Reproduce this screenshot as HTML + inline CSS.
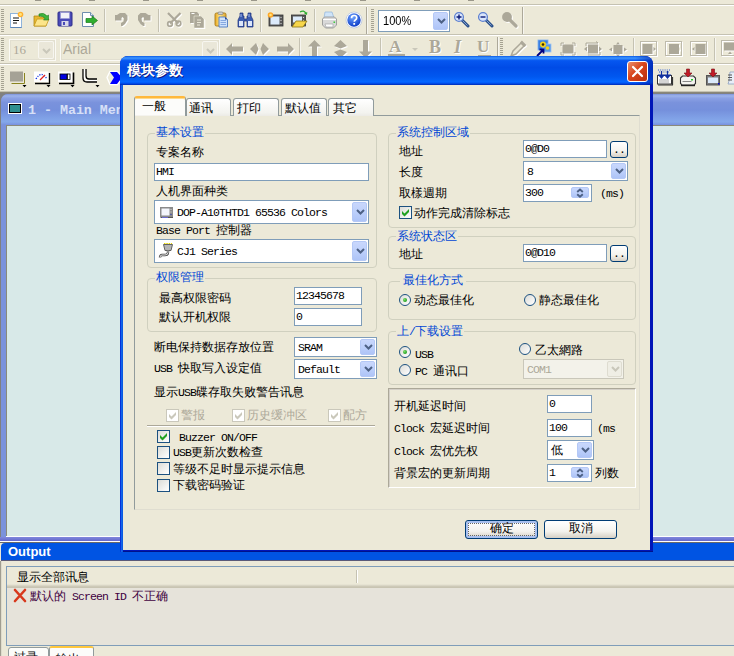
<!DOCTYPE html>
<html lang="zh">
<head>
<meta charset="utf-8">
<title>模块参数</title>
<style>
*{box-sizing:border-box;margin:0;padding:0}
html,body{width:734px;height:656px;overflow:hidden;background:#ece9d8}
body{position:relative;font-family:"Liberation Sans",sans-serif;font-size:12px;line-height:12px;color:#000}
.a{position:absolute}
.t{position:absolute;white-space:nowrap;font-size:12px;line-height:13px;height:13px}
.m{font-family:"Liberation Mono",monospace;font-size:11.500px;letter-spacing:-.9px}
.blue{color:#0046d5}
.hl{position:absolute;height:1px}
.vl{position:absolute;width:1px}
/* toolbars */
.grip{position:absolute;width:3px;background:repeating-linear-gradient(180deg,#a5a292 0,#a5a292 1px,#ece9d8 1px,#ece9d8 2px)}
.sep{position:absolute;width:1px;background:#c5c2b2;box-shadow:1px 0 0 #f7f6f0}
/* xp controls */
.tb{position:absolute;background:#fff;border:1px solid #7f9db9;font-size:12px;line-height:15px;padding-left:1px;white-space:nowrap;overflow:hidden}
.cb{position:absolute;background:#fff;border:1px solid #7f9db9;white-space:nowrap;overflow:hidden}
.dd{position:absolute;right:1px;top:1px;bottom:1px;width:15px;border-radius:2px;border:1px solid #b4c8f6;background:linear-gradient(180deg,#c9d7fc 0%,#bdd0fb 50%,#aec4f7 100%)}
.dd svg{position:absolute;left:3px;top:50%;margin-top:-3px}
.gb{position:absolute;border:1px solid #d0d0bf;border-radius:4px}
.gl{position:absolute;background:#ece9d8;color:#0046d5;white-space:nowrap;font-size:12px;line-height:13px;height:13px;padding:0 1px}
.chk{position:absolute;width:13px;height:13px;border:1px solid #1c5180;background:linear-gradient(135deg,#dcdcd7,#fff)}
.rad{position:absolute;width:12px;height:12px;border:1px solid #1c5180;border-radius:50%;background:linear-gradient(135deg,#dcdcd7,#fff)}
.btn{position:absolute;border:1px solid #003c74;border-radius:3px;background:linear-gradient(180deg,#fff 0%,#f4f3ee 60%,#d6d0c5 100%);text-align:center;font-size:12px}
.tab{position:absolute;border:1px solid #919b9c;border-bottom:none;border-radius:3px 3px 0 0;background:linear-gradient(180deg,#fff,#f3f3ef 80%,#ecebe6);font-size:12px;line-height:13px;white-space:nowrap}

.chk.dis{border-color:#cac8bb;background:#fff}
.chk.on::after,.chk.dis::after{content:"";position:absolute;left:2px;top:2px;width:7px;height:8px;background:#21a121;clip-path:polygon(0 2px,2.5px 4.5px,7px 0,7px 3px,2.5px 7.5px,0 5px)}
.chk.dis::after{background:#cac8bb}
.rad.on::after{content:"";position:absolute;left:3px;top:3px;width:4px;height:4px;border-radius:50%;background:radial-gradient(circle at 35% 35%,#7ede6a,#21a121 70%)}
.btn.def{box-shadow:inset 0 0 0 2px #a9c1f0,inset 0 -2px 0 #4b7ee0}
.btn.def::after{content:"";position:absolute;left:2px;top:2px;right:2px;bottom:2px;border:1px dotted #666}
.sp{position:absolute;right:2px;top:2px;bottom:3px;width:18px;border-radius:2px;border:1px solid #b4c8f6;background:linear-gradient(180deg,#c9d7fc 0%,#bdd0fb 50%,#aec4f7 100%)}
svg.dis{filter:drop-shadow(1px 1px 0 #fff)}
.emb{text-shadow:1px 1px 0 #fff}
</style>
</head>
<body>

<!-- ===== top strip / toolbars ===== -->
<div id="toolbars" class="a" style="left:0;top:0;width:734px;height:93px;background:#ece9d8">
  <div class="hl" style="left:0;top:4px;width:734px;background:#c5c2b2"></div>
  <div class="hl" style="left:0;top:5px;width:734px;background:#fff"></div>
  <div class="hl" style="left:0;top:34px;width:734px;background:#c5c2b2"></div>
  <div class="hl" style="left:0;top:35px;width:734px;background:#fff"></div>
  <div class="hl" style="left:0;top:63px;width:734px;background:#c5c2b2"></div>
  <div class="hl" style="left:0;top:64px;width:734px;background:#fff"></div>
  <div class="hl" style="left:0;top:91px;width:734px;background:#c5c2b2"></div>
  <div class="hl" style="left:0;top:92px;width:734px;background:#8a8778"></div>
  <div class="grip" style="left:1px;top:9px;height:23px"></div>
  <div class="grip" style="left:1px;top:38px;height:23px"></div>
  <div class="grip" style="left:1px;top:67px;height:23px"></div>
  <!-- menu text remnants at very top -->
  <div class="a" style="left:35px;top:0;width:6px;height:1px;background:#9a978a"></div>
  <div class="a" style="left:89px;top:0;width:6px;height:1px;background:#9a978a"></div>
  <div class="a" style="left:143px;top:0;width:6px;height:1px;background:#9a978a"></div>
  <div class="a" style="left:197px;top:0;width:6px;height:1px;background:#9a978a"></div>
  <div class="a" style="left:251px;top:0;width:6px;height:1px;background:#9a978a"></div>
  <div class="a" style="left:305px;top:0;width:6px;height:1px;background:#9a978a"></div>
  <div class="a" style="left:360px;top:0;width:6px;height:1px;background:#9a978a"></div>
  <div class="a" style="left:414px;top:0;width:6px;height:1px;background:#9a978a"></div>
  <div class="a" style="left:468px;top:0;width:6px;height:1px;background:#9a978a"></div>
  <!-- toolbar 1 icons -->
  <svg class="a" style="left:9px;top:11px" width="16" height="18" viewBox="0 0 16 18"><rect x="1.5" y="2.5" width="11" height="14" fill="#fff" stroke="#8fb4dc"/><path d="M1.5 16.5h11" stroke="#5c86b8"/><path d="M4 7h6M4 9.5h6M4 12h4" stroke="#111" stroke-width="1.2"/><circle cx="11.5" cy="3.5" r="2.8" fill="#ffb02e"/><circle cx="11.5" cy="3.5" r="1.4" fill="#ffe27a"/></svg>
  <svg class="a" style="left:33px;top:11px" width="17" height="17" viewBox="0 0 17 17"><path d="M1 5h5l1 1h6v9H1z" fill="#e8b830" stroke="#b08818" stroke-width=".8"/><path d="M1 15l3-7h12l-3 7z" fill="#fce58a" stroke="#c49a20" stroke-width=".8"/><path d="M6 3q5-2 8 2l1.5-1v5h-5l1.5-1.5q-2-3-6-2.500z" fill="#3fb53f" stroke="#1f7a1f" stroke-width=".6"/></svg>
  <svg class="a" style="left:57px;top:11px" width="16" height="16" viewBox="0 0 16 16"><rect x="1" y="1" width="14" height="14" rx="1" fill="#4a4ab8" stroke="#2c2c8a"/><rect x="3.500" y="1.500" width="9" height="6" fill="#f2f2f8" stroke="#9a9ad8" stroke-width=".6"/><rect x="4.500" y="10" width="7" height="5" fill="#d8d8e8"/><rect x="6" y="11" width="2" height="3" fill="#4a4ab8"/></svg>
  <svg class="a" style="left:81px;top:11px" width="17" height="17" viewBox="0 0 17 17"><path d="M1.500 1.500h8l3 3v11h-11z" fill="#fff" stroke="#6f8eae"/><path d="M9.500 1.500v3h3" fill="#dfe8f2" stroke="#6f8eae"/><path d="M5 7.500h6V5l5.500 4.500L11 14v-2.500H5z" fill="#2fae2f" stroke="#1a7a1a" stroke-width=".7"/></svg>
  <div class="sep" style="left:104px;top:9px;height:23px"></div>
  <!-- undo / redo (disabled) -->
  <svg class="a" style="left:114px;top:12px" width="16" height="16" viewBox="0 0 16 16"><path d="M1 3h2l3-2h5l2.500 2.500v4.500l-2.500 4-2.500 2h-1.500v-3l2.500-1.500.5-3-1.500-1.500-1 1v2.500h-6.500z" fill="#fff" transform="translate(1,1)"/><path d="M1 3h2l3-2h5l2.500 2.500v4.500l-2.500 4-2.500 2h-1.500v-3l2.500-1.500.5-3-1.500-1.500-1 1v2.500h-6.500z" fill="#aca899"/></svg>
  <svg class="a" style="left:136px;top:12px" width="17" height="16" viewBox="0 0 17 16"><g transform="translate(15.500,0) scale(-1,1)"><path d="M1 3h2l3-2h5l2.500 2.500v4.500l-2.500 4-2.500 2h-1.500v-3l2.500-1.500.5-3-1.500-1.500-1 1v2.500h-6.500z" fill="#fff" transform="translate(-1,1)"/><path d="M1 3h2l3-2h5l2.500 2.500v4.500l-2.500 4-2.500 2h-1.500v-3l2.500-1.500.5-3-1.500-1.500-1 1v2.500h-6.500z" fill="#aca899"/></g></svg>
  <div class="sep" style="left:158px;top:9px;height:23px"></div>
  <!-- cut / copy (disabled) -->
  <svg class="a dis" style="left:166px;top:12px" width="16" height="16" viewBox="0 0 16 16"><path d="M2 1L12.500 11.500M14.500 1L4 11.500" stroke="#aca899" stroke-width="2.200"/><circle cx="4" cy="12" r="2.300" fill="none" stroke="#aca899" stroke-width="1.700"/><circle cx="12.500" cy="11.500" r="2.300" fill="none" stroke="#aca899" stroke-width="1.700"/></svg>
  <svg class="a dis" style="left:189px;top:11px" width="16" height="17" viewBox="0 0 16 17"><path d="M1 1h7l2 2v9H1z" fill="#aca899"/><path d="M5 5h7l3 3v9H5z" fill="#aca899" stroke="#ece9d8" stroke-width=".6"/><path d="M8 9h4M8 11.500h4M8 14h3" stroke="#ece9d8" stroke-width="1"/><path d="M2.500 2.500h3" stroke="#fff" stroke-width="1"/></svg>
  <!-- paste -->
  <svg class="a" style="left:214px;top:11px" width="15" height="17" viewBox="0 0 15 17"><defs><linearGradient id="pg" x1="0" x2="1"><stop offset="0" stop-color="#e8a820"/><stop offset=".45" stop-color="#fde58a"/><stop offset="1" stop-color="#e0a428"/></linearGradient></defs><rect x="1" y="2" width="11" height="13" rx="1.500" fill="url(#pg)" stroke="#a87c1c" stroke-width=".9"/><rect x="4" y="1" width="5" height="2.500" rx="1" fill="#d0d0d0" stroke="#777" stroke-width=".6"/><path d="M5 6h6l2.500 2.500v7.500h-8.500z" fill="#cfe2fb" stroke="#4d78c0" stroke-width=".9"/><path d="M11 6v2.500h2.500z" fill="#2a4a9a"/><path d="M6.500 9.500h5.500M6.500 11.500h5.500M6.500 13.500h5.500" stroke="#7da2dc" stroke-width=".9"/></svg>
  <!-- find (binoculars) -->
  <svg class="a" style="left:237px;top:12px" width="17" height="16" viewBox="0 0 17 16"><path d="M3 1h3v3h1v3h3V4h1V1h3v3l2 4v7h-6V9H7v6H1V8l2-4z" fill="#3c5cb0" stroke="#1c2f78" stroke-width=".7"/><rect x="2" y="9" width="4" height="5" fill="#dce6fa"/><rect x="11" y="9" width="4" height="5" fill="#dce6fa"/><path d="M4 2v3M12 2v3" stroke="#a9bdf0" stroke-width="1"/></svg>
  <div class="sep" style="left:260px;top:9px;height:23px"></div>
  <!-- new screen -->
  <svg class="a" style="left:267px;top:11px" width="17" height="17" viewBox="0 0 17 17"><rect x="2" y="4" width="14" height="11" fill="#5a5a5a" stroke="#333" stroke-width=".8"/><rect x="3.500" y="5.500" width="9" height="8" fill="#dcebfb"/><path d="M14 6v1M14 9v1M14 12v1" stroke="#ddd" stroke-width="1"/><circle cx="3.500" cy="4" r="2.800" fill="#ffa727"/><circle cx="3.500" cy="4" r="1.300" fill="#ffe27a"/></svg>
  <!-- open screen -->
  <svg class="a" style="left:290px;top:9px" width="18" height="20" viewBox="0 0 18 20"><rect x="1.500" y="6" width="14" height="11" fill="#5a5a5a" stroke="#333" stroke-width=".8"/><rect x="3" y="7.500" width="9" height="6" fill="#dcebfb"/><path d="M13.500 8v1M13.500 11v1" stroke="#ddd" stroke-width="1"/><path d="M2 18l4-6h11l-4 6z" fill="#f7d64a" stroke="#8a7414" stroke-width=".8"/><path d="M10 3q4-2.500 6 1.500" fill="none" stroke="#2fae2f" stroke-width="1.300"/><path d="M14 4.500l3 1.500.3-3z" fill="#2fae2f"/></svg>
  <div class="sep" style="left:314px;top:9px;height:23px"></div>
  <!-- print -->
  <svg class="a" style="left:321px;top:11px" width="17" height="18" viewBox="0 0 17 18"><path d="M4 1h7l2 6H3z" fill="#cfe4f8" stroke="#8fb4dc" stroke-width=".7"/><path d="M1.500 8l2-2h10l2 2v6l-3 3h-8l-3-3z" fill="#d9d9d9" stroke="#8e8e8e" stroke-width=".8"/><path d="M2 8.500h13" stroke="#fff"/><path d="M4 13h8v3H5z" fill="#fff" stroke="#9a9a9a" stroke-width=".6"/><rect x="12.500" y="10.500" width="1.600" height="1.400" fill="#2ec82e"/></svg>
  <!-- help -->
  <svg class="a" style="left:345px;top:11px" width="18" height="18" viewBox="0 0 18 18"><defs><radialGradient id="hg" cx="40%" cy="30%" r="70%"><stop offset="0" stop-color="#6fa4ff"/><stop offset="1" stop-color="#0f3fc8"/></radialGradient></defs><circle cx="9" cy="9" r="8" fill="#fff" stroke="#b8c4dc" stroke-width=".8"/><circle cx="9" cy="9" r="6.700" fill="url(#hg)"/><path d="M6.500 7.200q0-2.700 2.600-2.700t2.600 2.300q0 1.400-1.400 2.100-1 .6-1 1.800" fill="none" stroke="#fff" stroke-width="1.700"/><rect x="8.300" y="12" width="1.800" height="1.800" fill="#fff"/></svg>
  <div class="sep" style="left:366px;top:7px;height:27px;background:#aca899"></div>
  <!-- toolbar 1b : zoom -->
  <div class="grip" style="left:371px;top:9px;height:23px"></div>
  <div class="cb" style="left:378px;top:10px;width:72px;height:22px">
    <div class="t" style="left:4px;top:4px;font-family:'Liberation Sans',sans-serif;font-size:12px;transform:scaleX(.92);transform-origin:0 0">100%</div>
    <div class="dd"><svg width="9" height="6" viewBox="0 0 9 6"><path d="M1 1l3.500 3.500L8 1" fill="none" stroke="#4d6185" stroke-width="2"/></svg></div>
  </div>
  <svg class="a" style="left:453px;top:11px" width="17" height="17" viewBox="0 0 17 17"><path d="M9 9l6 6" stroke="#2a4f8a" stroke-width="3" stroke-linecap="round"/><path d="M9.500 9.500l5 5" stroke="#7fa0d0" stroke-width="1"/><circle cx="6" cy="6" r="4.400" fill="#dbe6fb" stroke="#5c7fd0" stroke-width="1.300"/><path d="M3.500 6h5M6 3.500v5" stroke="#0a1a7a" stroke-width="1.400"/></svg>
  <svg class="a" style="left:477px;top:11px" width="17" height="17" viewBox="0 0 17 17"><path d="M9 9l6 6" stroke="#2a4f8a" stroke-width="3" stroke-linecap="round"/><path d="M9.500 9.500l5 5" stroke="#7fa0d0" stroke-width="1"/><circle cx="6" cy="6" r="4.400" fill="#dbe6fb" stroke="#5c7fd0" stroke-width="1.300"/><path d="M3.500 6h5" stroke="#0a1a7a" stroke-width="1.400"/></svg>
  <svg class="a dis" style="left:501px;top:11px" width="17" height="17" viewBox="0 0 17 17"><path d="M9 9l6 6" stroke="#aca899" stroke-width="3.200" stroke-linecap="round"/><circle cx="6" cy="6" r="4.900" fill="#aca899"/></svg>
  <div class="sep" style="left:522px;top:7px;height:27px;background:#aca899"></div>
  <!-- toolbar 2 : font controls (disabled) -->
  <div class="a" style="left:9px;top:39px;width:47px;height:22px;border:1px solid #fbfaf5;background:#ece9d8;box-shadow:inset 0 0 0 1px #e2dfd0">
    <div class="t" style="left:3px;top:3px;color:#aca899;font-family:'Liberation Serif',serif;font-size:13px;line-height:13px">16</div>
    <div class="a" style="right:1px;top:1px;bottom:1px;width:16px;border:1px solid #f7f6f0;border-radius:2px;background:#eae7d9"><svg class="a" style="left:3px;top:6px" width="9" height="6" viewBox="0 0 9 6"><path d="M1 1l3.500 3.500L8 1" fill="none" stroke="#c9c7ba" stroke-width="2"/></svg></div>
  </div>
  <div class="a" style="left:60px;top:39px;width:160px;height:22px;border:1px solid #fbfaf5;background:#ece9d8;box-shadow:inset 0 0 0 1px #e2dfd0">
    <div class="t" style="left:2px;top:1px;color:#aca899;font-size:14px;line-height:16px;height:16px">Arial</div>
    <div class="a" style="right:1px;top:1px;bottom:1px;width:16px;border:1px solid #f7f6f0;border-radius:2px;background:#eae7d9"><svg class="a" style="left:3px;top:6px" width="9" height="6" viewBox="0 0 9 6"><path d="M1 1l3.500 3.500L8 1" fill="none" stroke="#c9c7ba" stroke-width="2"/></svg></div>
  </div>
  <svg class="a dis" style="left:226px;top:42px" width="17" height="14" viewBox="0 0 17 14"><path d="M0 7l6-6v3.500h11v5H6V13z" fill="#aca899"/></svg>
  <svg class="a dis" style="left:250px;top:42px" width="19" height="14" viewBox="0 0 19 14"><path d="M0 7l6-6 2.500 6L6 13zM19 7l-6-6-2.500 6L13 13z" fill="#aca899"/></svg>
  <svg class="a dis" style="left:277px;top:42px" width="17" height="14" viewBox="0 0 17 14"><path d="M17 7l-6-6v3.500H0v5h11V13z" fill="#aca899"/></svg>
  <div class="sep" style="left:299px;top:38px;height:23px"></div>
  <svg class="a dis" style="left:308px;top:40px" width="13" height="18" viewBox="0 0 13 18"><path d="M6.500 0l6.500 6.500H9V18H4V6.500H0z" fill="#aca899"/></svg>
  <svg class="a dis" style="left:334px;top:40px" width="13" height="18" viewBox="0 0 13 18"><path d="M6.500 0l6.500 6-6.500 2.500L0 6zM6.500 18l6.500-6-6.500-2.500L0 12z" fill="#aca899"/></svg>
  <svg class="a dis" style="left:359px;top:40px" width="13" height="18" viewBox="0 0 13 18"><path d="M6.500 18l6.500-6.500H9V0H4v11.500H0z" fill="#aca899"/></svg>
  <div class="sep" style="left:380px;top:38px;height:23px"></div>
  <div class="t" style="left:389px;top:39px;color:#aca899;font-family:'Liberation Serif',serif;font-weight:bold;font-size:17px;line-height:16px;height:16px;text-shadow:1px 1px 0 #fff">A</div>
  <div class="a" style="left:388px;top:54px;width:17px;height:2px;background:#aca899"></div>
  <div class="a" style="left:412px;top:48px;border:3px solid transparent;border-top:3px solid #c9c7ba;border-bottom:none"></div>
  <div class="t" style="left:429px;top:39px;color:#aca899;font-family:'Liberation Serif',serif;font-weight:bold;font-size:18px;line-height:16px;height:16px;text-shadow:1px 1px 0 #fff">B</div>
  <div class="t" style="left:454px;top:39px;color:#aca899;font-family:'Liberation Serif',serif;font-weight:bold;font-style:italic;font-size:18px;line-height:16px;height:16px;text-shadow:1px 1px 0 #fff">I</div>
  <div class="t" style="left:477px;top:39px;color:#aca899;font-family:'Liberation Serif',serif;font-weight:bold;font-size:17px;line-height:16px;height:16px;text-shadow:1px 1px 0 #fff">U</div>
  <div class="a" style="left:478px;top:55px;width:13px;height:1px;background:#aca899"></div>
  <div class="sep" style="left:497px;top:37px;height:25px;background:#aca899"></div>
  <div class="grip" style="left:500px;top:38px;height:22px"></div>
  <svg class="a dis" style="left:510px;top:40px" width="17" height="17" viewBox="0 0 17 17"><path d="M1 16l2-5 8-8 3 3-8 8z" fill="#ece9d8" stroke="#aca899" stroke-width="1.500"/><path d="M11 1.500l4.500 4.500" stroke="#aca899" stroke-width="2.600"/></svg>
  <svg class="a" style="left:536px;top:39px" width="16" height="18" viewBox="0 0 16 18"><rect x="2" y="1" width="10" height="10" fill="#3a7fe0" stroke="#7fb0f0" stroke-width=".8"/><rect x="7" y="5" width="8" height="8" fill="#5a9ae8" stroke="#9cc4f4" stroke-width=".8"/><circle cx="7" cy="5.500" r="3" fill="#f2d11c"/><circle cx="7" cy="5.500" r="1.300" fill="#3a2a00"/><circle cx="11.500" cy="9" r="1.800" fill="#f2d11c"/><path d="M1 17l6-6M3.500 10.500h4v4" fill="none" stroke="#000080" stroke-width="1.800"/></svg>
  <!-- layout icons disabled -->
  <svg class="a dis" style="left:560px;top:42px" width="17" height="15" viewBox="0 0 17 15"><rect x="2.500" y="2.500" width="11" height="9" fill="#aca899"/><path d="M1 4V1h3M12 1h3v3M15 10v3h-3M4 13H1v-3" fill="none" stroke="#aca899" stroke-width="1"/></svg>
  <svg class="a dis" style="left:583px;top:40px" width="20" height="18" viewBox="0 0 20 18"><rect x="5" y="4.500" width="10" height="9" fill="#aca899"/><path d="M3 6v-3h12l-2-1.500M17 12v3H5" fill="none" stroke="#aca899" stroke-width="1"/><path d="M1 9l3-2.500v5zM19 9l-3-2.500v5z" fill="#aca899"/></svg>
  <svg class="a dis" style="left:609px;top:42px" width="18" height="15" viewBox="0 0 18 15"><rect x="4.500" y="3" width="9" height="9" fill="#aca899"/><path d="M0 7.500l3-2v4zM18 7.500l-3-2v4zM9 0l2 2.500H7zM9 15l2-2.500H7z" fill="#aca899"/></svg>
  <div class="sep" style="left:633px;top:38px;height:23px"></div>
  <svg class="a dis" style="left:640px;top:41px" width="18" height="16" viewBox="0 0 18 16"><rect x=".5" y=".5" width="16" height="14" fill="none" stroke="#bdbaab"/><rect x="2.500" y="3" width="10" height="10" fill="#aca899"/><path d="M16 8l-2.500-2v4z" fill="#aca899"/></svg>
  <svg class="a dis" style="left:665px;top:41px" width="18" height="16" viewBox="0 0 18 16"><rect x=".5" y=".5" width="16" height="14" fill="none" stroke="#bdbaab"/><rect x="4" y="3" width="10" height="10" fill="#aca899"/><path d="M2 8l2-2v4zM16 8l-2-2v4z" fill="#ece9d8"/></svg>
  <svg class="a dis" style="left:690px;top:41px" width="18" height="16" viewBox="0 0 18 16"><rect x=".5" y=".5" width="16" height="14" fill="none" stroke="#bdbaab"/><rect x="5.500" y="3" width="10" height="10" fill="#aca899"/><path d="M2 8l2.500-2v4z" fill="#aca899"/></svg>
  <div class="sep" style="left:714px;top:38px;height:23px"></div>
  <svg class="a dis" style="left:721px;top:40px" width="18" height="17" viewBox="0 0 18 17"><rect x=".5" y=".5" width="16" height="15" fill="none" stroke="#bdbaab"/><rect x="3" y="2.500" width="12" height="8" fill="#aca899"/><path d="M9 11.500l2 2.500H7z" fill="#aca899"/></svg>

  <!-- toolbar 3 -->
  <svg class="a" style="left:9px;top:70px" width="18" height="18" viewBox="0 0 18 18"><rect x="1" y="1.500" width="13" height="10" fill="#a5a296"/><path d="M15.500 3v10.500H2.500" fill="none" stroke="#8a8420" stroke-width="1"/><path d="M13.500 15h4l-2 2.300z" fill="#000"/></svg>
  <svg class="a" style="left:33px;top:70px" width="18" height="18" viewBox="0 0 18 18"><rect x="1" y="1.500" width="14.500" height="10.500" fill="#fff"/><path d="M16.500 3v10.500H2" fill="none" stroke="#000" stroke-width="1.300"/><path d="M3 9q5.500-9 11 0" fill="none" stroke="#1030e0" stroke-width="1.300" stroke-dasharray="1.200 1.300"/><path d="M7 10l5-5" stroke="#e02020" stroke-width="1.300"/><path d="M13.500 15h4l-2 2.300z" fill="#000"/></svg>
  <svg class="a" style="left:57px;top:70px" width="18" height="18" viewBox="0 0 18 18"><rect x="1" y="1.500" width="14.500" height="10.500" fill="#fff"/><path d="M16.500 2.500v11H2" fill="none" stroke="#000" stroke-width="1.600"/><rect x="3" y="4" width="7" height="5.500" fill="#0000e0" stroke="#000" stroke-width=".8"/><rect x="10.500" y="4" width="2.500" height="5.500" fill="#fff" stroke="#000" stroke-width=".8"/><path d="M13.500 15h4l-2 2.300z" fill="#000"/></svg>
  <svg class="a" style="left:81px;top:68px" width="19" height="20" viewBox="0 0 19 20"><path d="M2 1v9q0 4 4 4h10" fill="none" stroke="#000" stroke-width="1.300"/><path d="M5 1v7q0 3 3 3h8" fill="none" stroke="#000" stroke-width="1.300"/><path d="M3.500 1v8q0 3.500 3.500 3.500h9" fill="none" stroke="#fff" stroke-width="1.200"/><path d="M14.500 17h4l-2 2.300z" fill="#000"/></svg>
  <svg class="a" style="left:106px;top:70px" width="16" height="16" viewBox="106 70 16 16"><path d="M110 71.500L117.500 71.500 122 77.500 117.500 84.500 110 84.500 107 77.500z" fill="none" stroke="#fff" stroke-width="1.300"/><path d="M110 72L117 72 122 77.500 117 84 110 84 114 77.500z" fill="#0000ff"/></svg>
  <!-- right of dialog -->
  <svg class="a" style="left:656px;top:68px" width="18" height="19" viewBox="0 0 18 19"><rect x="1.500" y="7.500" width="14" height="8.500" fill="#fff" stroke="#333"/><path d="M2 17h15M16.500 9v8" stroke="#333" stroke-width="1.200"/><path d="M3.500 12h10M3.500 14h10" stroke="#555" stroke-width="1" stroke-dasharray="1 1"/><path d="M2 2h13M3 4h11" stroke="#2a5ad0" stroke-width="1" stroke-dasharray="1 1.200"/><path d="M5.500 3v5M11.500 3v5M3 7l2.500 3L8 7zM9 7l2.500 3L14 7z" fill="#1030a0" stroke="#1030a0" stroke-width="1.200"/></svg>
  <svg class="a" style="left:679px;top:68px" width="18" height="19" viewBox="0 0 18 19"><path d="M1.500 10l2-2h11l2 2v5.500l-1.500 1.500h-12l-1.500-1.500z" fill="#f4f4f0" stroke="#333" stroke-width="1.100"/><path d="M2 17.500h14" stroke="#222" stroke-width="1.400"/><path d="M3.500 13.500h9" stroke="#888" stroke-width="1"/><rect x="12" y="11" width="2" height="1.500" fill="#20c820"/><path d="M7.500 1h3v4h2.500L9 9 5 5h2.500z" fill="#c01c28" stroke="#7a0c14" stroke-width=".6"/></svg>
  <svg class="a" style="left:705px;top:68px" width="17" height="19" viewBox="0 0 17 19"><rect x="1.500" y="7.500" width="13" height="9.500" fill="#7a7a7a" stroke="#555"/><rect x="3" y="9.500" width="10" height="5.500" fill="#dbeafb"/><rect x="13" y="15" width="1.500" height="1.500" fill="#0000d0"/><path d="M6.500 1h3v4h2.500L8 9 4 5h2.500z" fill="#c01c28" stroke="#7a0c14" stroke-width=".6"/></svg>
  <svg class="a" style="left:727px;top:70px" width="8" height="16" viewBox="0 0 8 16"><path d="M3 2h5v12H1l1-3z" fill="#e8eef8" stroke="#8aa0c0" stroke-width=".8"/><path d="M1 5h4M1 7.500h4M1 10h4" stroke="#555" stroke-width="1"/></svg>
</div>

<!-- ===== MDI area ===== -->
<div id="mdi" class="a" style="left:0;top:93px;width:734px;height:450px;background:#808080">
  <div class="a" style="left:1px;top:1px;width:740px;height:448px;border-radius:7px 0 0 0;background:#7b92dc"></div>
  <div class="a" style="left:1px;top:1px;width:740px;height:31px;border-radius:7px 0 0 0;background:linear-gradient(180deg,#7d93dc 0%,#9cb2ea 6%,#8aa0e4 14%,#7a92dc 28%,#7590dc 52%,#82a4e8 82%,#84a8ea 90%,#7890de 100%)"></div>
  <div class="a" style="left:6px;top:32px;width:734px;height:412px;background:#d8e9e8;border-left:1px solid #8a8a7a;border-top:1px solid #8a8a7a"></div>
  <div class="hl" style="left:6px;top:443px;width:734px;background:#fff"></div>
  <div class="a" style="left:0;top:444px;width:734px;height:4px;background:linear-gradient(180deg,#8088dc,#6468cc)"></div>
  <div class="hl" style="left:0;top:448px;width:734px;background:#fff"></div>
  <div class="hl" style="left:0;top:449px;width:734px;background:#6a6a6a"></div>
  <div class="a" style="left:8px;top:10px;width:14px;height:11px;background:#fff"></div>
  <div class="a" style="left:9px;top:11px;width:12px;height:9px;background:#2f8f8f;border:1px solid #000"></div>
  <div class="t" style="left:28px;top:11px;color:#d7e0f7;font-family:'Liberation Mono',monospace;font-weight:bold;font-size:13.3px;letter-spacing:0">1 - Main Menu</div>
</div>

<!-- ===== Output panel ===== -->
<div id="output" class="a" style="left:0;top:543px;width:734px;height:113px;background:#ece9d8">
  <div class="a" style="left:1px;top:0;width:734px;height:18px;background:#0054e3;border-radius:4px 0 0 0"></div>
  <div class="hl" style="left:1px;top:17px;width:734px;background:#5a5a78"></div>
  <div class="t" style="left:8px;top:2px;color:#fff;font-weight:bold;font-size:13px;line-height:14px;height:14px">Output</div>
  <div class="a" style="left:6px;top:23px;width:734px;height:80px;border:1px solid #7f9db9;background:#e6e3da"></div>
  <div class="a" style="left:7px;top:24px;width:734px;height:21px;background:linear-gradient(180deg,#ece9d8 0,#ece9d8 17px,#e0ddcd 18px,#d2cebd 19px,#c8c4b2 20px,#c8c4b2 21px)"></div>
  <div class="vl" style="left:356px;top:27px;height:13px;background:#c5c2b2;box-shadow:1px 0 0 #fff"></div>
  <div class="t" style="left:17px;top:28px">显示全部讯息</div>
  <svg class="a" style="left:13px;top:45px" width="14" height="15" viewBox="0 0 14 15"><path d="M2 2 L12 13 M12 2 L2 13" stroke="#d8381c" stroke-width="2.6" stroke-linecap="round"/></svg>
  <div class="t" style="left:30px;top:47px;color:#400040">默认的<span class="m"> Screen ID </span>不正确</div>
  <div class="a" style="left:8px;top:104px;width:41px;height:12px;border:1px solid #919b9c;border-radius:3px 3px 0 0;background:#fcfcfa"></div>
  <div class="a" style="left:49px;top:103px;width:45px;height:14px;border:1px solid #919b9c;border-top:2px solid #ffc73c;border-radius:3px 3px 0 0;background:#fcfcfa"></div>
  <div class="t" style="left:14px;top:108px">过录</div>
  <div class="vl" style="left:0;top:18px;height:95px;background:#a09d90"></div>
  <div class="vl" style="left:1px;top:18px;height:95px;background:#dedbcc"></div>
  <div class="t" style="left:56px;top:110px">输出</div>
</div>

<!-- ===== Dialog ===== -->
<div id="dlg" class="a" style="left:120px;top:56px;width:533px;height:496px;background:#0015b8;border-radius:8px 8px 0 0">
  <div id="cap" class="a" style="left:0;top:0;width:533px;height:29px;border-radius:8px 8px 0 0;background:linear-gradient(90deg,rgba(0,30,160,0) 0,rgba(0,30,160,0) 515px,rgba(0,20,150,.55) 533px),linear-gradient(180deg,#0a5ae8 0%,#3f97ff 7%,#0657f0 16%,#004be6 40%,#0058f0 72%,#0466ff 88%,#0058f8 93%,#0034c4 98%,#0034c4 100%)"></div>
  <div class="t" style="left:7px;top:8px;color:#fff;font-weight:bold;font-size:13.800px;line-height:14px;height:14px;text-shadow:1px 1px 0 #0a1883">模块参数</div>
  <div id="close" class="a" style="left:507px;top:5px;width:21px;height:21px;border:1px solid #fff;border-radius:3px;background:linear-gradient(135deg,#e9906e 0%,#d8451c 45%,#b8300f 100%)">
    <svg class="a" style="left:3px;top:3px" width="13" height="13" viewBox="0 0 13 13"><path d="M2 2 L11 11 M11 2 L2 11" stroke="#fff" stroke-width="2.2" stroke-linecap="round"/></svg>
  </div>
  <div id="client" class="a" style="left:3px;top:29px;width:527px;height:465px;background:#ece9d8"></div>
  <div class="hl" style="left:0;top:495px;width:533px;background:#00138c"></div>
  <div class="vl" style="left:0;top:29px;width:3px;height:467px;background:linear-gradient(90deg,#0831d9 0,#0831d9 1px,#166aee 1px,#0855dd 3px)"></div>
</div>

<!-- dialog content: absolute page coordinates -->
<div id="content" class="a" style="left:0;top:0;width:734px;height:656px">
  <!-- tab page frame -->
  <div class="a" style="left:134px;top:115px;width:506px;height:395px;border:1px solid #919b9c;border-right-color:#dfddd0;border-bottom-color:#dfddd0;background:#ece9d8"></div>
  <!-- tabs -->
  <div class="tab" style="left:186px;top:98px;width:45px;height:18px"></div>
  <div class="tab" style="left:233px;top:98px;width:46px;height:18px"></div>
  <div class="tab" style="left:281px;top:98px;width:46px;height:18px"></div>
  <div class="tab" style="left:328px;top:98px;width:46px;height:18px"></div>
  <div class="tab" style="left:134px;top:96px;width:52px;height:20px;border-top:2px solid #ffb83c;box-shadow:inset 0 1px 0 #fdd98a;background:#fcfcfa"></div>
  <div class="hl" style="left:135px;top:115px;width:50px;background:#f4f3ee"></div>
  <div class="t" style="left:142px;top:100px">一般</div>
  <div class="t" style="left:189px;top:102px">通讯</div>
  <div class="t" style="left:237px;top:102px">打印</div>
  <div class="t" style="left:285px;top:102px">默认值</div>
  <div class="t" style="left:333px;top:102px">其它</div>

  <!-- group: 基本设置 -->
  <div class="gb" style="left:147px;top:133px;width:230px;height:135px"></div>
  <div class="gl" style="left:155px;top:126px">基本设置</div>
  <div class="t" style="left:156px;top:146px">专案名称</div>
  <div class="tb" style="left:154px;top:163px;width:215px;height:18px"><span class="m">HMI</span></div>
  <div class="t" style="left:156px;top:185px">人机界面种类</div>
  <div class="cb" style="left:154px;top:200px;width:215px;height:24px">
    <svg class="a" style="left:4px;top:5px" width="15" height="13" viewBox="0 0 15 13"><rect x="1" y="1" width="13" height="10" fill="#8a8a8a"/><rect x="2.500" y="2.500" width="8" height="7" fill="#f4f6fb"/><path d="M12 3v1M12 5.500v1" stroke="#ddd" stroke-width="1"/><rect x="11.500" y="8" width="1" height="1" fill="#2030c0"/><path d="M1.500 11.500h12.500" stroke="#555"/><path d="M3 11.500h6" stroke="#6a6ad0"/></svg>
    <div class="t m" style="left:22px;top:5px">DOP-A10THTD1 65536 Colors</div>
    <div class="dd"><svg width="9" height="6" viewBox="0 0 9 6"><path d="M1 1l3.5 3.5L8 1" fill="none" stroke="#4d6185" stroke-width="2"/></svg></div>
  </div>
  <div class="t" style="left:156px;top:224px"><span class="m">Base Port </span>控制器</div>
  <div class="cb" style="left:154px;top:239px;width:215px;height:24px">
    <svg class="a" style="left:3px;top:2px" width="16" height="18" viewBox="0 0 16 18"><path d="M6 1.500h8" stroke="#e8d800" stroke-width="1.200" stroke-dasharray="1.500 .8"/><path d="M5.500 2.500h9l-1.500 6h-6z" fill="#b4b4b4" stroke="#555" stroke-width=".9"/><path d="M10 8.500v2q0 2.500-3 2.500H4q-2 0-2 2.500" fill="none" stroke="#444" stroke-width="2.400"/><path d="M10 8.500v2q0 2.500-3 2.500H4q-2 0-2 2.500" fill="none" stroke="#e4e4e4" stroke-width="1"/></svg>
    <div class="t m" style="left:22px;top:5px">CJ1 Series</div>
    <div class="dd"><svg width="9" height="6" viewBox="0 0 9 6"><path d="M1 1l3.5 3.5L8 1" fill="none" stroke="#4d6185" stroke-width="2"/></svg></div>
  </div>

  <!-- group: 权限管理 -->
  <div class="gb" style="left:147px;top:278px;width:230px;height:54px"></div>
  <div class="gl" style="left:155px;top:271px">权限管理</div>
  <div class="t" style="left:159px;top:292px">最高权限密码</div>
  <div class="tb" style="left:294px;top:287px;width:68px;height:18px"><span class="m">12345678</span></div>
  <div class="t" style="left:159px;top:311px">默认开机权限</div>
  <div class="tb" style="left:294px;top:308px;width:68px;height:18px"><span class="m">0</span></div>

  <div class="t" style="left:154px;top:341px">断电保持数据存放位置</div>
  <div class="cb" style="left:294px;top:337px;width:83px;height:20px">
    <div class="t m" style="left:3px;top:3px">SRAM</div>
    <div class="dd"><svg width="9" height="6" viewBox="0 0 9 6"><path d="M1 1l3.5 3.5L8 1" fill="none" stroke="#4d6185" stroke-width="2"/></svg></div>
  </div>
  <div class="t" style="left:154px;top:362px"><span class="m">USB </span>快取写入设定值</div>
  <div class="cb" style="left:294px;top:359px;width:83px;height:20px">
    <div class="t m" style="left:3px;top:3px">Default</div>
    <div class="dd"><svg width="9" height="6" viewBox="0 0 9 6"><path d="M1 1l3.5 3.5L8 1" fill="none" stroke="#4d6185" stroke-width="2"/></svg></div>
  </div>
  <div class="t" style="left:154px;top:386px">显示<span class="m">USB</span>碟存取失败警告讯息</div>

  <!-- disabled checkboxes -->
  <div class="chk dis" style="left:166px;top:409px"></div>
  <div class="t" style="left:181px;top:409px;color:#aca899">警报</div>
  <div class="chk dis" style="left:232px;top:409px"></div>
  <div class="t" style="left:247px;top:409px;color:#aca899">历史缓冲区</div>
  <div class="chk dis" style="left:328px;top:409px"></div>
  <div class="t" style="left:343px;top:409px;color:#aca899">配方</div>
  <div class="hl" style="left:147px;top:425px;width:228px;background:#aca899;box-shadow:0 1px 0 #fff"></div>

  <div class="chk on" style="left:157px;top:430px"></div>
  <div class="t m" style="left:179px;top:431px">Buzzer ON/OFF</div>
  <div class="chk" style="left:157px;top:446px"></div>
  <div class="t" style="left:173px;top:446px"><span class="m">USB</span>更新次数检查</div>
  <div class="chk" style="left:157px;top:462px"></div>
  <div class="t" style="left:173px;top:463px">等级不足时显示提示信息</div>
  <div class="chk" style="left:157px;top:479px"></div>
  <div class="t" style="left:173px;top:479px">下载密码验证</div>
  <!-- group: 系统控制区域 -->
  <div class="gb" style="left:388px;top:133px;width:248px;height:95px"></div>
  <div class="gl" style="left:396px;top:126px">系统控制区域</div>
  <div class="t" style="left:399px;top:145px">地址</div>
  <div class="tb" style="left:523px;top:140px;width:84px;height:18px"><span class="m">0@D0</span></div>
  <div class="btn" style="left:610px;top:141px;width:18px;height:17px"><span class="m" style="position:relative;top:1px">..</span></div>
  <div class="t" style="left:399px;top:166px">长度</div>
  <div class="cb" style="left:523px;top:161px;width:105px;height:20px">
    <div class="t m" style="left:3px;top:3px">8</div>
    <div class="dd"><svg width="9" height="6" viewBox="0 0 9 6"><path d="M1 1l3.5 3.5L8 1" fill="none" stroke="#4d6185" stroke-width="2"/></svg></div>
  </div>
  <div class="t" style="left:399px;top:187px">取樣週期</div>
  <div class="tb" style="left:523px;top:184px;width:69px;height:18px"><span class="m">300</span>
    <div class="sp"><svg class="a" style="left:4px;top:0" width="8" height="10" viewBox="0 0 8 10"><path d="M1.200 4L4 1.500 6.800 4M1.200 6.200L4 8.700 6.800 6.200" fill="none" stroke="#4d6185" stroke-width="1.900"/></svg></div>
  </div>
  <div class="t m" style="left:600px;top:187px">(ms)</div>
  <div class="chk on" style="left:399px;top:206px"></div>
  <div class="t" style="left:414px;top:207px">动作完成清除标志</div>

  <!-- group: 系统状态区 -->
  <div class="gb" style="left:388px;top:236px;width:248px;height:33px"></div>
  <div class="gl" style="left:396px;top:230px">系统状态区</div>
  <div class="t" style="left:399px;top:248px">地址</div>
  <div class="tb" style="left:523px;top:244px;width:84px;height:18px"><span class="m">0@D10</span></div>
  <div class="btn" style="left:610px;top:245px;width:18px;height:17px"><span class="m" style="position:relative;top:1px">..</span></div>

  <!-- group: 最佳化方式 -->
  <div class="gb" style="left:388px;top:281px;width:248px;height:39px"></div>
  <div class="gl" style="left:400px;top:274px;padding:0 3px">最佳化方式</div>
  <div class="rad on" style="left:399px;top:294px"></div>
  <div class="t" style="left:414px;top:294px">动态最佳化</div>
  <div class="rad" style="left:524px;top:294px"></div>
  <div class="t" style="left:539px;top:294px">静态最佳化</div>

  <!-- group: 上/下载设置 -->
  <div class="gb" style="left:388px;top:331px;width:248px;height:54px"></div>
  <div class="gl" style="left:396px;top:325px">上<span class="m">/</span>下载设置</div>
  <div class="rad on" style="left:399px;top:346px"></div>
  <div class="t m" style="left:415px;top:348px">USB</div>
  <div class="rad" style="left:519px;top:343px"></div>
  <div class="t" style="left:535px;top:344px">乙太網路</div>
  <div class="rad" style="left:399px;top:364px"></div>
  <div class="t" style="left:415px;top:365px"><span class="m">PC </span>通讯口</div>
  <div class="cb" style="left:523px;top:359px;width:101px;height:20px;background:#f3f2ea;border-color:#c9c7ba">
    <div class="t m" style="left:3px;top:3px;color:#aca899">COM1</div>
    <div class="dd" style="background:#efeee5;border-color:#dedcd0"><svg width="9" height="6" viewBox="0 0 9 6"><path d="M1 1l3.5 3.5L8 1" fill="none" stroke="#c9c7ba" stroke-width="2"/></svg></div>
  </div>

  <!-- sunken box -->
  <div class="a" style="left:388px;top:388px;width:248px;height:100px;border:1px solid #aca899;border-right-color:#fff;border-bottom-color:#fff;box-shadow:inset 1px 1px 0 #d4d0c8"></div>
  <div class="t" style="left:394px;top:400px">开机延迟时间</div>
  <div class="tb" style="left:547px;top:395px;width:45px;height:18px"><span class="m">0</span></div>
  <div class="t" style="left:394px;top:422px"><span class="m">Clock </span>宏延迟时间</div>
  <div class="tb" style="left:547px;top:419px;width:45px;height:18px"><span class="m">100</span></div>
  <div class="t m" style="left:597px;top:422px;width:20px;overflow:hidden">(ms)</div>
  <div class="t" style="left:394px;top:445px"><span class="m">Clock </span>宏优先权</div>
  <div class="cb" style="left:547px;top:440px;width:47px;height:20px">
    <div class="t" style="left:3px;top:3px">低</div>
    <div class="dd"><svg width="9" height="6" viewBox="0 0 9 6"><path d="M1 1l3.5 3.5L8 1" fill="none" stroke="#4d6185" stroke-width="2"/></svg></div>
  </div>
  <div class="t" style="left:394px;top:467px">背景宏的更新周期</div>
  <div class="tb" style="left:547px;top:464px;width:45px;height:18px"><span class="m">1</span>
    <div class="sp"><svg class="a" style="left:4px;top:0" width="8" height="10" viewBox="0 0 8 10"><path d="M1.200 4L4 1.500 6.800 4M1.200 6.200L4 8.700 6.800 6.200" fill="none" stroke="#4d6185" stroke-width="1.900"/></svg></div>
  </div>
  <div class="t" style="left:595px;top:467px">列数</div>

  <!-- buttons -->
  <div class="btn def" style="left:465px;top:520px;width:73px;height:19px"><span style="position:relative;top:1px">确定</span></div>
  <div class="btn" style="left:544px;top:520px;width:73px;height:19px"><span style="position:relative;top:1px">取消</span></div>
</div>

</body>
</html>
